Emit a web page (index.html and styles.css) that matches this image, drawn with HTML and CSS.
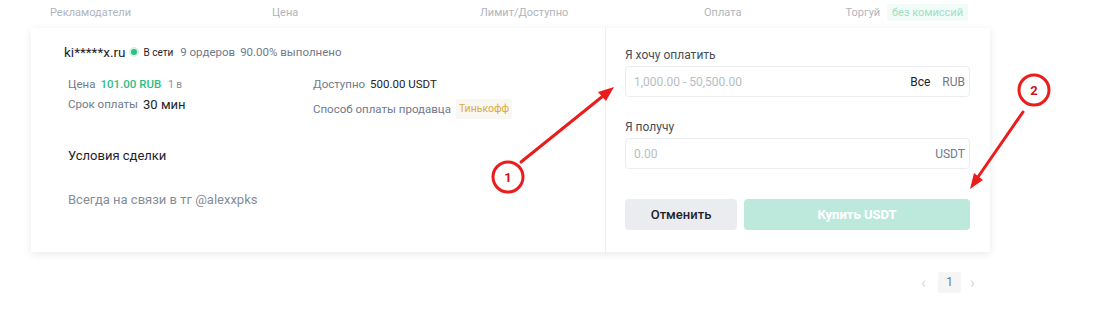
FILE: index.html
```html
<!DOCTYPE html>
<html lang="ru">
<head>
  <meta charset="UTF-8" />
  <meta name="viewport" content="width=device-width, initial-scale=1.0" />
  <title>P2P — Купить USDT</title>
  <link rel="stylesheet" href="styles.css">
</head>
<body>
  <div class="stranica">
    <div class="shapka">
      <span>Рекламодатели</span>
      <span>Цена</span>
      <span>Лимит/Доступно</span>
      <span>Оплата</span>
      <span class="torgui">Торгуй <em class="bez">без комиссий</em></span>
    </div>

    <div class="karta">
      <div class="levo">
        <div class="prodavec">
          <span class="imya">ki*****x.ru</span>
          <span class="tochka"></span>
          <span class="vseti">В сети</span>
          <span class="seryj">9 ордеров</span>
          <span class="seryj">90.00% выполнено</span>
        </div>
        <div class="info">
          <div class="kolonka">
            <div class="stroka"><span class="seryj">Цена</span> <span class="cena">101.00 RUB</span> <span class="melko">1 в</span></div>
            <div class="stroka"><span class="seryj">Срок оплаты</span> <span class="srok">30 мин</span></div>
          </div>
          <div class="kolonka vtoraya">
            <div class="stroka"><span class="seryj">Доступно</span> <span class="temn">500.00 USDT</span></div>
            <div class="stroka"><span class="seryj">Способ оплаты продавца</span> <span class="bank">Тинькофф</span></div>
          </div>
        </div>
        <div class="usloviya">Условия сделки</div>
        <div class="tekst">Всегда на связи в тг @alexxpks</div>
      </div>

      <div class="pravo">
        <div class="metka">Я хочу оплатить</div>
        <div class="pole">
          <span class="podskazka">1,000.00 - 50,500.00</span>
          <span class="vse">Все</span>
          <span class="valuta">RUB</span>
        </div>
        <div class="metka vtoraya-metka">Я получу</div>
        <div class="pole">
          <span class="podskazka">0.00</span>
          <span class="valuta">USDT</span>
        </div>
        <div class="knopki">
          <button class="btn otmena">Отменить</button>
          <button class="btn kupit">Купить USDT</button>
        </div>
      </div>
    </div>

    <div class="stranicy">
      <span class="strelka">&#8249;</span>
      <span class="nomer">1</span>
      <span class="strelka">&#8250;</span>
    </div>
  </div>

  <!-- пометки поверх скриншота -->
  <svg class="pometki" width="1103" height="332" viewBox="0 0 1103 332">
    <g stroke="#ea1c1c" stroke-width="3" fill="none" stroke-linecap="round">
      <line x1="521" y1="162" x2="603" y2="96" />
      <line x1="1023" y1="112" x2="978" y2="177" />
      <circle cx="508" cy="177" r="15" fill="#fff" />
      <circle cx="1034" cy="90" r="15" fill="#fff" />
    </g>
    <g fill="#ea1c1c">
      <polygon points="614,87 606,101 598,92" />
      <polygon points="970,189 983,180 974,173" />
    </g>
    <g fill="#c8161a" font-family="Roboto, sans-serif" font-size="13" font-weight="700" text-anchor="middle">
      <text x="508" y="182">1</text>
      <text x="1034" y="95">2</text>
    </g>
  </svg>
</body>
</html>
```

FILE: styles.css
```css
body {
  margin: 0;
  font-family: Roboto, 'Noto Sans', sans-serif;
  background: #fff;
  color: #1e2329;
}
.stranica {
  width: 959px;
  margin-left: 31px;
}
.shapka {
  display: grid;
  grid-template-columns: 222px 208px 224px 1fr auto;
  align-items: center;
  height: 25px;
  padding: 0 22px 0 19px;
  font-size: 11px;
  color: #b0b5bc;
}
.bez {
  font-style: normal;
  margin-left: 4px;
  padding: 2px 5px;
  background: #f1fbf7;
  color: #a3dec7;
  border-radius: 2px;
}
.karta {
  display: flex;
  height: 224px;
  margin-top: 3px;
  background: #fff;
  box-shadow: 0 2px 8px rgba(0, 0, 0, 0.09);
}
.levo {
  width: 541px;
  padding: 14px 0 0 33px;
  border-right: 1px solid #eaecef;
}
.prodavec {
  display: flex;
  align-items: center;
  height: 20px;
  font-size: 11.5px;
}
.imya { font-size: 13.5px; color: #1e2329; }
.tochka {
  width: 6px;
  height: 6px;
  margin: 0 6px 0 6px;
  border-radius: 50%;
  background: #2ebd85;
  box-shadow: 0 0 0 2px #d5f2e6;
}
.vseti { font-size: 10px; margin-right: 7px; }
.seryj { color: #707a8a; margin-right: 5px; }
.info {
  display: flex;
  margin: 12px 0 0 4px;
  font-size: 11.5px;
}
.kolonka { width: 245px; }
.stroka { display: flex; align-items: center; height: 20px; }
.vtoraya .stroka + .stroka { margin-top: 5px; }
.cena { color: #2ebd85; font-weight: 500; margin-right: 7px; }
.melko { font-size: 10px; color: #848e9c; }
.srok { font-size: 13px; }
.temn { color: #1e2329; }
.bank {
  padding: 0 3px;
  line-height: 20px;
  background: #f8f7f2;
  color: #dcaa3c;
  font-size: 10.5px;
  border-radius: 2px;
}
.usloviya {
  margin: 27px 0 0 4px;
  line-height: 20px;
  font-size: 13px;
}
.tekst {
  margin: 24px 0 0 4px;
  line-height: 20px;
  font-size: 13px;
  color: #848e9c;
}
.pravo {
  flex: 1;
  padding: 18px 20px 0 19px;
}
.metka {
  line-height: 18px;
  margin-bottom: 2px;
  font-size: 12px;
  color: #474d57;
}
.vtoraya-metka { margin-top: 21px; }
.pole {
  display: flex;
  align-items: center;
  height: 29px;
  padding: 0 4px 0 8px;
  border: 1px solid #eaecef;
  border-radius: 4px;
  font-size: 12px;
}
.podskazka { flex: 1; color: #b7bdc6; }
.vse { color: #1e2329; margin-right: 12px; }
.valuta { color: #707a8a; }
.knopki {
  display: flex;
  gap: 7px;
  margin-top: 30px;
}
.btn {
  height: 31px;
  border: none;
  border-radius: 4px;
  font-family: inherit;
  font-size: 13px;
  font-weight: 500;
}
.otmena { width: 112px; background: #eaecef; color: #1e2329; }
.kupit { flex: 1; background: #bde9dc; color: #fff; font-weight: 700; }
.stranicy {
  display: flex;
  align-items: center;
  justify-content: flex-end;
  gap: 9px;
  margin-top: 20px;
  padding-right: 12px;
  font-size: 12px;
}
.strelka { color: #d5d8dc; font-size: 16px; width: 8px; }
.nomer {
  width: 23px;
  height: 21px;
  line-height: 21px;
  text-align: center;
  background: #f5f5f5;
  color: #707a8a;
  border-radius: 2px;
}
.pometki {
  position: absolute;
  top: 0;
  left: 0;
  pointer-events: none;
}
```
